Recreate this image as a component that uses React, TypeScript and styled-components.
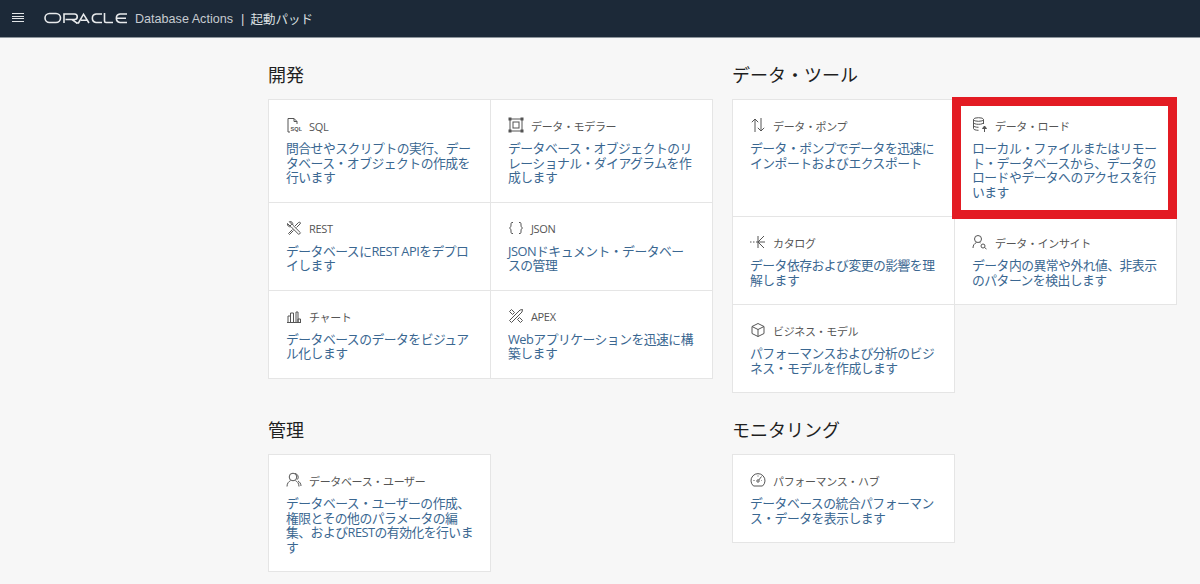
import styled, { createGlobalStyle } from "styled-components";
import type { ReactNode } from "react";

const GlobalStyle = createGlobalStyle`
  html, body {
    margin: 0;
    padding: 0;
    background: #f7f7f7;
  }
  body {
    font-family: "Open Sans", "Noto Sans CJK JP", sans-serif;
    overflow: hidden;
  }
`;

const Page = styled.div`
  width: 1200px;
  height: 584px;
  overflow: hidden;
`;

const Header = styled.header`
  height: 37px;
  background: #1c2938;
  border-bottom: 1px solid #8d959c;
  display: flex;
  align-items: center;
  padding-left: 12px;
`;

const Burger = styled.span`
  display: flex;
  flex-direction: column;
  gap: 1.8px;
  width: 11.5px;
  margin: 0 20.5px 2px 0;
  span {
    height: 1px;
    background: #e0e3e6;
  }
`;

const Logo = styled.svg`
  width: 84px;
  height: 12px;
  margin: 0 7px 1px 0;
`;

const Product = styled.span`
  font-family: "Liberation Sans", "Noto Sans CJK JP", sans-serif;
  font-size: 12.6px;
  color: #c6cbd0;
`;

const Divider = styled.span`
  font-family: "Liberation Sans", sans-serif;
  font-size: 13px;
  color: #d5d8db;
  margin: 0 6px 0 8px;
`;

const PageName = styled.span`
  font-size: 12.5px;
  color: #dfe2e4;
`;

const Main = styled.main`
  display: grid;
  grid-template-columns: 444px 444px;
  column-gap: 20px;
  row-gap: 25px;
  padding: 24px 0 0 268px;
`;

const Section = styled.section``;

const Heading = styled.h2`
  margin: 0 0 12px;
  height: 25px;
  line-height: 26px;
  font-size: 18px;
  font-weight: 400;
  color: #1f1f1f;
`;

const Cards = styled.div`
  display: grid;
  grid-template-columns: 1fr 1fr;
  align-content: start;
`;

const Card = styled.article<{ $marked?: boolean }>`
  position: relative;
  background: #fff;
  border: 1px solid #e5e5e5;
  margin: 0 -1px -1px 0;
  padding: 16px 10px 17px 17px;
  z-index: ${(props) => (props.$marked ? 1 : 0)};
  &::after {
    content: "";
    display: ${(props) => (props.$marked ? "block" : "none")};
    position: absolute;
    inset: -3px -1px -3px -3px;
    border: 9px solid #e31b23;
  }
`;

const CardTop = styled.div`
  display: flex;
  align-items: center;
  height: 22px;
  margin-bottom: 3px;
`;

const IconBox = styled.svg`
  width: 16px;
  height: 16px;
  margin-right: 7px;
  flex: none;
  fill: none;
  stroke: #555;
  stroke-width: 1;
  position: relative;
  top: -2px;
`;

const Title = styled.span`
  font-size: 11px;
  letter-spacing: -0.35px;
  color: #555;
  white-space: nowrap;
  position: relative;
  top: -1px;
`;

const Desc = styled.p`
  margin: 0;
  font-size: 12.8px;
  letter-spacing: -0.5px;
  line-height: 14.5px;
  color: #3a6791;
  white-space: nowrap;
`;

const icons: Record<string, ReactNode> = {
  sql: (
    <>
      <path d="M2 8V1.500h6l3 3V7M8 1.500v3h3M2 8v7h2" />
      <text x="4.600" y="13.500" fontSize="5.600" fontWeight="700" fill="#555" stroke="none" fontFamily="Liberation Sans">SQL</text>
    </>
  ),
  model: (
    <>
      <path d="M3 2h10M3 14h10M2 3v10M14 3v10" />
      <rect x="1" y="1" width="2" height="2" fill="#555" />
      <rect x="13" y="1" width="2" height="2" fill="#555" />
      <rect x="1" y="13" width="2" height="2" fill="#555" />
      <rect x="13" y="13" width="2" height="2" fill="#555" />
      <rect x="5" y="5" width="6" height="6" />
    </>
  ),
  rest: (
    <>
      <path d="M1.500 3.500 4 6l1.800-1.800-2.500-2.500C5.500 1 7.300 2.800 6.700 5L14.500 12.800 12.800 14.500 5 6.700C2.800 7.300 1 5.500 1.500 3.500z" />
      <path d="M9 6 12.500 2.500l1-.5 1 1-.5 1L10.500 7.500M6.500 9.500 2.500 13.500l1 1L7.500 10.500" />
    </>
  ),
  json: (
    <>
      <path d="M5 2.500H4C3 2.500 3 3.500 3 5s-.3 2.500-1.500 3C2.700 8.500 3 9.500 3 11s0 2.500 1 2.500h1" />
      <path d="M11 2.500h1c1 0 1 1 1 2.500s.3 2.500 1.500 3c-1.200.5-1.500 1.500-1.500 3s0 2.500-1 2.500h-1" />
    </>
  ),
  chart: (
    <>
      <path d="M1 14.500h14M2 14V8h2.500v6M4.500 14V5h3v9M10 14V4h2v10M12 14v-3h2.500v3" />
    </>
  ),
  apex: (
    <>
      <path d="M1.500 12.500 12 2l2.500-.5L14 4 3.500 14.500z" />
      <path d="M1.500 3.500 3.500 1.500 6.500 4.500 4.500 6.500zM9.500 11.500 11.500 9.500 14.500 12.500 12.500 14.500z" />
    </>
  ),
  pump: (
    <>
      <path d="M5 15V2M1.800 5.200 5 2l3.200 3.200M11 1v13M7.800 10.800 11 14l3.200-3.200" />
    </>
  ),
  load: (
    <>
      <ellipse cx="6.500" cy="2.500" rx="5" ry="1.800" />
      <path d="M1.500 2.500v9c0 1 2 1.800 5 1.800M11.500 2.500V7M1.500 5.500c0 1 2 1.800 5 1.800s5-.8 5-1.800M1.500 8.500c0 1 2 1.800 5 1.800" />
      <path d="M12.500 15V9.500" />
      <path d="M10.500 11.500 12.500 9l2 2.500z" fill="#555" />
    </>
  ),
  catalog: (
    <>
      <path d="M0 8h1.500M3 8h1.500M6 8h9M8 8l6-6M8 8l6 6M8 2v12" />
    </>
  ),
  insight: (
    <>
      <circle cx="6" cy="5" r="3.500" />
      <path d="M1 14c0-3 1.500-4.500 3.500-5.500M7.500 8.500l1 .4" />
      <circle cx="11" cy="12" r="2" />
      <path d="m12.500 13.500 2 1.500" />
    </>
  ),
  cube: (
    <>
      <path d="M8 1.500 14 4.500v7L8 14.500 2 11.500v-7zM2 4.500 8 7.500l6-3M8 7.500v7" />
    </>
  ),
  users: (
    <>
      <circle cx="7" cy="5" r="3.800" />
      <path d="M1 14.500c0-3.500 2-5 3.500-5.800M9.500 8.700c1.500.8 3.500 2.300 3.500 5.800M9 1.500a3.800 3.800 0 0 1 2.500 6M12 9c1.500.8 3 2.500 3 5" />
    </>
  ),
  gauge: (
    <>
      <path d="M3.500 14A7 7 0 1 1 12.500 14z" />
      <circle cx="8" cy="9" r="1.200" />
      <path d="m8.800 8 2.700-3.500M3.500 8.500h1M8 3.500v1M12 8.500h-.5" />
    </>
  ),
};

interface CardData {
  icon: string;
  title: string;
  lines: string[];
  marked?: boolean;
}

interface SectionData {
  heading: string;
  cards: CardData[];
}

const sections: SectionData[] = [
  {
    heading: "開発",
    cards: [
      { icon: "sql", title: "SQL", lines: ["問合せやスクリプトの実行、デー", "タベース・オブジェクトの作成を", "行います"] },
      { icon: "model", title: "データ・モデラー", lines: ["データベース・オブジェクトのリ", "レーショナル・ダイアグラムを作", "成します"] },
      { icon: "rest", title: "REST", lines: ["データベースにREST APIをデプロ", "イします"] },
      { icon: "json", title: "JSON", lines: ["JSONドキュメント・データベー", "スの管理"] },
      { icon: "chart", title: "チャート", lines: ["データベースのデータをビジュア", "ル化します"] },
      { icon: "apex", title: "APEX", lines: ["Webアプリケーションを迅速に構", "築します"] },
    ],
  },
  {
    heading: "データ・ツール",
    cards: [
      { icon: "pump", title: "データ・ポンプ", lines: ["データ・ポンプでデータを迅速に", "インポートおよびエクスポート"] },
      { icon: "load", title: "データ・ロード", marked: true, lines: ["ローカル・ファイルまたはリモー", "ト・データベースから、データの", "ロードやデータへのアクセスを行", "います"] },
      { icon: "catalog", title: "カタログ", lines: ["データ依存および変更の影響を理", "解します"] },
      { icon: "insight", title: "データ・インサイト", lines: ["データ内の異常や外れ値、非表示", "のパターンを検出します"] },
      { icon: "cube", title: "ビジネス・モデル", lines: ["パフォーマンスおよび分析のビジ", "ネス・モデルを作成します"] },
    ],
  },
  {
    heading: "管理",
    cards: [
      { icon: "users", title: "データベース・ユーザー", lines: ["データベース・ユーザーの作成、", "権限とその他のパラメータの編", "集、およびRESTの有効化を行いま", "す"] },
    ],
  },
  {
    heading: "モニタリング",
    cards: [
      { icon: "gauge", title: "パフォーマンス・ハブ", lines: ["データベースの統合パフォーマン", "ス・データを表示します"] },
    ],
  },
];

function OracleLogo() {
  return (
    <Logo viewBox="0 0 84 12" fill="none" stroke="#e8eaec" strokeWidth="1.600" aria-label="ORACLE">
      <rect x="1" y="1.500" width="15.500" height="9" rx="4.500" />
      <path d="M20 11V2h10.500a2.700 2.700 0 0 1 0 5.500H21.500M28 7.500 33 11.200" />
      <path d="M32 11h2.500l5-8.800 5.500 8.800M37 8.200h6.500" />
      <path d="M58 2h-6a4.300 4.300 0 0 0 0 8.500h6" />
      <path d="M60.500 1v8c0 1 .5 1.500 1.500 1.500h7" />
      <path d="M83 2h-7a4.300 4.300 0 0 0 0 8.500h7M72 6.200h10" />
    </Logo>
  );
}

function App() {
  return (
    <Page>
      <GlobalStyle />
      <Header>
        <Burger>
          <span />
          <span />
          <span />
          <span />
        </Burger>
        <OracleLogo />
        <Product>Database Actions</Product>
        <Divider>|</Divider>
        <PageName>起動パッド</PageName>
      </Header>
      <Main>
        {sections.map((section) => (
          <Section key={section.heading}>
            <Heading>{section.heading}</Heading>
            <Cards>
              {section.cards.map((card) => (
                <Card key={card.title} $marked={card.marked}>
                  <CardTop>
                    <IconBox viewBox="0 0 16 16">{icons[card.icon]}</IconBox>
                    <Title>{card.title}</Title>
                  </CardTop>
                  <Desc>
                    {card.lines.map((line) => (
                      <span key={line}>
                        {line}
                        <br />
                      </span>
                    ))}
                  </Desc>
                </Card>
              ))}
            </Cards>
          </Section>
        ))}
      </Main>
    </Page>
  );
}

export default App;
